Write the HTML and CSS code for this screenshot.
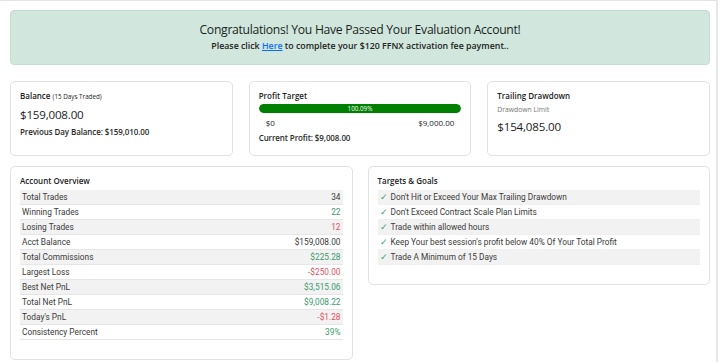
FILE: index.html
```html
<!DOCTYPE html>
<html lang="en">
<head>
	<meta charset="UTF-8">
	<meta name="viewport" content="width=device-width, initial-scale=1.0">
	<title>Evaluation Account</title>
	<link rel="stylesheet" href="styles.css">
</head>
<body>
	<div class="page">
		<div class="alert">
			<h4>Congratulations! You Have Passed Your Evaluation Account!</h4>
			<h6>Please click <a href="#">Here</a> to complete your $120 FFNX activation fee payment..</h6>
		</div>

		<div class="stats">
			<div class="card">
				<div class="card-title">Balance <small>(15 Days Traded)</small></div>
				<div class="big">$159,008.00</div>
				<div class="sub">Previous Day Balance: $159,010.00</div>
			</div>
			<div class="card">
				<div class="card-title">Profit Target</div>
				<div class="progress"><div class="bar" style="width: 100%">100.09%</div></div>
				<div class="range"><span>$0</span><span>$9,000.00</span></div>
				<div class="sub">Current Profit: $9,008.00</div>
			</div>
			<div class="card">
				<div class="card-title">Trailing Drawdown</div>
				<div class="muted">Drawdown Limit</div>
				<div class="big">$154,085.00</div>
			</div>
		</div>

		<div class="details">
			<div class="card overview">
				<div class="card-title">Account Overview</div>
				<table class="striped">
					<tr><td>Total Trades</td><td>34</td></tr>
					<tr><td>Winning Trades</td><td class="up">22</td></tr>
					<tr><td>Losing Trades</td><td class="down">12</td></tr>
					<tr><td>Acct Balance</td><td>$159,008.00</td></tr>
					<tr><td>Total Commissions</td><td class="up">$225.28</td></tr>
					<tr><td>Largest Loss</td><td class="down">-$250.00</td></tr>
					<tr><td>Best Net PnL</td><td class="up">$3,515.06</td></tr>
					<tr><td>Total Net PnL</td><td class="up">$9,008.22</td></tr>
					<tr><td>Today's PnL</td><td class="down">-$1.28</td></tr>
					<tr><td>Consistency Percent</td><td class="up">39%</td></tr>
				</table>
			</div>
			<div class="card goals">
				<div class="card-title">Targets &amp; Goals</div>
				<ul class="striped">
					<li><span class="check">✓</span>Don't Hit or Exceed Your Max Trailing Drawdown</li>
					<li><span class="check">✓</span>Don't Exceed Contract Scale Plan Limits</li>
					<li><span class="check">✓</span>Trade within allowed hours</li>
					<li><span class="check">✓</span>Keep Your best session's profit below 40% Of Your Total Profit</li>
					<li><span class="check">✓</span>Trade A Minimum of 15 Days</li>
				</ul>
			</div>
		</div>
	</div>
</body>
</html>
```

FILE: styles.css
```css
html, body { margin: 0; padding: 0; background: #fff; }
body { font-family: "Open Sans", "Noto Sans", sans-serif; color: #212529; }

.page {
	width: 700px;
	height: 361px;
	padding: 9px 6px 0 10px;
	border-top: 1px solid #e4e4e4;
	border-right: 2px solid #e8e8e8;
	box-sizing: content-box;
	overflow: hidden;
}

.alert {
	background: #d1e7dd;
	border: 1px solid #c3ddd0;
	border-radius: 4px;
	text-align: center;
	padding: 9px 0 10px;
	height: 34px;
}
.alert h4 { margin: 0; font-size: 12.2px; font-weight: 500; line-height: 19px; letter-spacing: -0.3px; color: #1c1f22; }
.alert h6 { margin: 0; font-size: 8.8px; font-weight: 600; line-height: 14px; color: #222; }
.alert a { color: #0d6efd; }

.card {
	border: 1px solid #e2e2e2;
	border-radius: 5px;
	background: #fff;
	box-sizing: border-box;
	padding: 8px 9px;
}
.card-title { font-size: 8px; font-weight: 600; line-height: 12px; color: #222; }
.card-title small { font-size: 6.3px; font-weight: 500; }

.stats {
	display: grid;
	grid-template-columns: repeat(3, 1fr);
	gap: 16px;
	margin-top: 16px;
}
.stats .card { height: 75px; }

.big { font-size: 11.6px; font-weight: 500; line-height: 20px; margin-top: 2px; letter-spacing: -0.2px; color: #1d1d1d; }
.sub { font-size: 8px; font-weight: 600; line-height: 14px; letter-spacing: -0.1px; color: #2a2a2a; }
.muted { font-size: 6.8px; color: #777; line-height: 10px; margin-top: 3px; }

.progress {
	height: 9px;
	border-radius: 5px;
	background: #e9ecef;
	margin-top: 2px;
	overflow: hidden;
}
.bar {
	height: 100%;
	background: #008000;
	border-radius: 5px;
	color: #fff;
	font-size: 6.3px;
	line-height: 9px;
	text-align: center;
}
.range {
	display: flex;
	justify-content: space-between;
	padding: 0 7px;
	font-size: 8px;
	font-weight: 500;
	line-height: 16px;
	margin-top: 2px;
}

.details {
	display: grid;
	grid-template-columns: 1fr 1fr;
	gap: 15px;
	margin-top: 10px;
	align-items: start;
}
.overview { height: 194px; }
.goals { height: 119px; }

.striped { width: 100%; margin: 3px 0 0; padding: 0; border-collapse: collapse; font-family: Roboto, "Open Sans", sans-serif; font-size: 8.3px; color: #3a3a3a; }
.striped td { padding: 0 2px; height: 14px; border-bottom: 1px solid #e6e6e6; }
.striped td:last-child { text-align: right; }
.striped tr:nth-child(odd) td { background: #f2f2f2; }
.up { color: #3a9a6b; }
.down { color: #e0515d; }

ul.striped { list-style: none; }
ul.striped li { height: 14px; line-height: 14px; padding: 0 2px; border-bottom: 1px solid #f0f0f0; }
ul.striped li:nth-child(odd) { background: #f2f2f2; }
.check { color: #3a9a6b; margin-right: 3px; font-size: 8.5px; }
```
